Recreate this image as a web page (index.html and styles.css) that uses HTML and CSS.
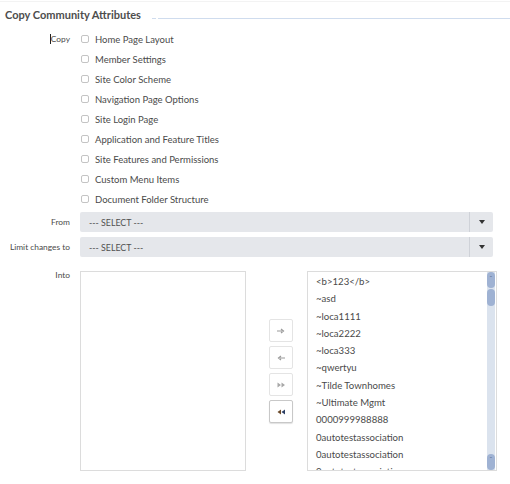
FILE: index.html
```html
<!DOCTYPE html>
<html>
<head>
<meta charset="utf-8">
<link rel="stylesheet" href="styles.css">
</head>
<body>
<div class="page">
  <div class="legend">
    <span class="legend-title">Copy Community Attributes</span>
    <span class="legend-dash"></span>
    <span class="legend-line"></span>
  </div>

  <div class="row row-copy">
    <div class="label"><span class="caret"></span>Copy</div>
    <div class="checks">
      <label class="check"><span class="box"></span>Home Page Layout</label>
      <label class="check"><span class="box"></span>Member Settings</label>
      <label class="check"><span class="box"></span>Site Color Scheme</label>
      <label class="check"><span class="box"></span>Navigation Page Options</label>
      <label class="check"><span class="box"></span>Site Login Page</label>
      <label class="check"><span class="box"></span>Application and Feature Titles</label>
      <label class="check"><span class="box"></span>Site Features and Permissions</label>
      <label class="check"><span class="box"></span>Custom Menu Items</label>
      <label class="check"><span class="box"></span>Document Folder Structure</label>
    </div>
  </div>

  <div class="row row-select">
    <div class="label">From</div>
    <div class="select"><span class="select-text">--- SELECT ---</span><span class="select-arrow"><span class="tri"></span></span></div>
  </div>
  <div class="row row-select row-limit">
    <div class="label">Limit changes to</div>
    <div class="select"><span class="select-text">--- SELECT ---</span><span class="select-arrow"><span class="tri"></span></span></div>
  </div>

  <div class="row row-into">
    <div class="label">Into</div>
    <div class="transfer">
      <div class="listbox left"></div>
      <div class="buttons">
        <button class="btn"><svg width="8" height="6" viewBox="0 0 8 6"><path d="M0 3H5M4 1L6.5 3L4 5" stroke="#9a9a9a" stroke-width="1.2" fill="none"/></svg></button>
        <button class="btn"><svg width="8" height="6" viewBox="0 0 8 6"><path d="M8 3H3M4 1L1.5 3L4 5" stroke="#9a9a9a" stroke-width="1.2" fill="none"/></svg></button>
        <button class="btn"><svg width="9" height="6" viewBox="0 0 9 6"><path d="M0.5 0.5L4 3L0.5 5.5Z M4.5 0.5L8 3L4.5 5.5Z" fill="#a8a8a8"/></svg></button>
        <button class="btn active"><svg width="9" height="6" viewBox="0 0 9 6"><path d="M4 0.5L0.5 3L4 5.5Z" fill="#6b4a2a"/><path d="M8 0.5L4.5 3L8 5.5Z" fill="#2c3e64"/></svg></button>
      </div>
      <div class="listbox right">
        <div class="items">
          <div class="item">&lt;b&gt;123&lt;/b&gt;</div>
          <div class="item">~asd</div>
          <div class="item">~loca1111</div>
          <div class="item">~loca2222</div>
          <div class="item">~loca333</div>
          <div class="item">~qwertyu</div>
          <div class="item">~Tilde Townhomes</div>
          <div class="item">~Ultimate Mgmt</div>
          <div class="item">0000999988888</div>
          <div class="item">0autotestassociation</div>
          <div class="item">0autotestassociation</div>
          <div class="item">0autotestassociation</div>
        </div>
        <div class="scrollbar">
          <span class="sb-btn sb-up">&#710;</span>
          <span class="sb-thumb"></span>
          <span class="sb-fill"></span>
          <span class="sb-btn sb-down">&#711;</span>
        </div>
      </div>
    </div>
  </div>
</div>
</body>
</html>
```

FILE: styles.css
```css
* { box-sizing: border-box; }
html, body { margin: 0; padding: 0; background: #fff; }
body {
  font-family: Lato, "Noto Sans", sans-serif;
  color: #4a4a4a;
  width: 510px;
  height: 484px;
  overflow: hidden;
}
.page {
  border-top: 1px solid #f3f3f3;
  margin-top: 1px;
}
.legend {
  display: flex;
  align-items: center;
  height: 27px;
  padding-left: 5px;
  padding-bottom: 2px;
}
.legend-title {
  font-size: 11px;
  font-weight: 700;
  color: #4d4d4d;
}
.legend-dash {
  width: 4px;
  height: 1px;
  background: #cfdcee;
  margin: 7px 0 0 11px;
}
.legend-line {
  flex: 1;
  height: 1px;
  background: #cfdcee;
  margin: 7px 0 0 2px;
}
.row {
  display: grid;
  grid-template-columns: 70px 1fr;
  column-gap: 10px;
}
.label {
  text-align: right;
  font-size: 8.4px;
  color: #4a4a4a;
  white-space: nowrap;
}
.caret {
  display: inline-block;
  width: 1px;
  height: 10px;
  background: #222;
  vertical-align: -2px;
}
.row-copy .label { line-height: 20px; }
.checks { display: flex; flex-direction: column; }
.check {
  display: flex;
  align-items: center;
  height: 20px;
  font-size: 9.5px;
  color: #4a4a4a;
}
.box {
  width: 8px;
  height: 8px;
  border: 1px solid #c4c4c4;
  border-radius: 2px;
  margin: 0 6px 0 1px;
  background: #fff;
}
.row-select { margin-top: 3px; align-items: center; }
.row-limit { margin-top: 5px; }
.select {
  width: 413px;
  height: 20px;
  background: #e5e7eb;
  border-radius: 2px;
  display: flex;
  align-items: center;
}
.select-text {
  flex: 1;
  font-size: 8.8px;
  color: #505050;
  padding-left: 9px;
}
.select-arrow {
  width: 24px;
  height: 20px;
  border-left: 1px solid #cfd2d8;
  display: flex;
  align-items: center;
  justify-content: center;
}
.tri {
  width: 0; height: 0;
  border-left: 3px solid transparent;
  border-right: 3px solid transparent;
  border-top: 4px solid #333;
}
.row-into { margin-top: 14px; }
.row-into .label { line-height: 1; }
.transfer {
  display: flex;
  align-items: flex-start;
}
.listbox {
  height: 200px;
  border: 1px solid #dcdcdc;
  background: #fff;
}
.listbox.left { width: 166px; }
.buttons {
  display: flex;
  flex-direction: column;
  gap: 4px;
  margin: 48px 14px 0 23px;
}
.btn {
  width: 24px;
  height: 23px;
  padding: 0;
  border: 1px solid #e4e4e4;
  border-radius: 2px;
  background: #fff;
  display: flex;
  align-items: center;
  justify-content: center;
}
.btn.active {
  border-color: #c8c8c8;
  box-shadow: 0 1px 1px rgba(0,0,0,0.12);
}
.listbox.right {
  width: 190px;
  display: flex;
  overflow: hidden;
}
.items {
  flex: 1;
  overflow: hidden;
  padding: 1px 0 0 8px;
}
.item {
  height: 17.3px;
  line-height: 17.3px;
  font-size: 9.6px;
  color: #4a4a4a;
  white-space: nowrap;
}
.scrollbar {
  width: 8px;
  background: #dbe3ee;
  display: flex;
  flex-direction: column;
  align-items: center;
  margin-right: 1px;
}
.sb-btn {
  width: 8px;
  height: 16px;
  border-radius: 4px;
  background: #9fb2d3;
  color: #5c6f92;
  font-size: 7px;
  line-height: 14px;
  text-align: center;
}
.sb-down { line-height: 12px; }
.sb-thumb {
  width: 8px;
  height: 17px;
  border-radius: 4px;
  background: #9fb2d3;
  margin-top: 1px;
}
.sb-fill { flex: 1; }
```
